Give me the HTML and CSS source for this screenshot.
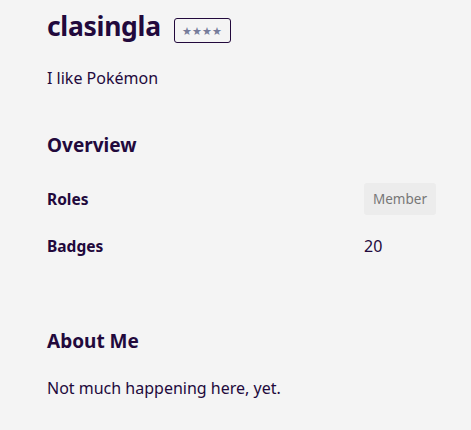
FILE: index.html
```html
<!DOCTYPE html>
<html>
<head>
<meta charset="utf-8">
<link rel="stylesheet" href="styles.css">
</head>
<body>
<main class="profile">
  <header class="profile-head">
    <h1 class="username">clasingla</h1>
    <span class="rank">★★★★</span>
  </header>
  <p class="bio">I like Pokémon</p>

  <section class="section">
    <h2 class="section-title">Overview</h2>
    <dl class="facts">
      <dt class="fact-label">Roles</dt>
      <dd class="fact-value"><span class="role">Member</span></dd>
      <dt class="fact-label">Badges</dt>
      <dd class="fact-value">20</dd>
    </dl>
  </section>

  <section class="section about">
    <h2 class="section-title">About Me</h2>
    <p class="about-text">Not much happening here, yet.</p>
  </section>
</main>
</body>
</html>
```

FILE: styles.css
```css
html, body {
  margin: 0;
  padding: 0;
  background: #f4f4f4;
}
body {
  font-family: "Noto Sans", "Open Sans", sans-serif;
  color: #22093c;
}
.profile {
  padding: 6px 35px 0 47px;
}
.profile-head {
  display: flex;
  align-items: center;
  gap: 13px;
  height: 40px;
}
.username {
  margin: 0;
  font-size: 26.5px;
  font-weight: 700;
  letter-spacing: -0.3px;
  line-height: 40px;
}
.rank {
  display: inline-flex;
  align-items: center;
  justify-content: center;
  box-sizing: border-box;
  width: 57px;
  height: 25px;
  margin-top: 8px;
  border: 1px solid #22093c;
  border-radius: 3px;
  font-size: 11px;
  color: #767c9a;
}
.bio {
  margin: 20px 0 0;
  font-size: 16px;
  line-height: 24px;
}
.section {
  margin-top: 42px;
}
.section-title {
  margin: 0;
  font-size: 19px;
  font-weight: 700;
  line-height: 26px;
}
.facts {
  display: grid;
  grid-template-columns: 1fr 72px;
  row-gap: 15px;
  margin: 25px 0 0;
  align-items: center;
}
.fact-label {
  font-size: 15.5px;
  font-weight: 700;
  line-height: 32px;
}
.fact-value {
  margin: 0;
  font-size: 16px;
  line-height: 32px;
}
.role {
  display: block;
  background: #ececec;
  border-radius: 3px;
  color: #777;
  font-size: 13.5px;
  text-align: center;
  line-height: 32px;
}
.about {
  margin-top: 66px;
}
.about-text {
  margin: 22px 0 0;
  font-size: 16px;
  line-height: 24px;
}
```
